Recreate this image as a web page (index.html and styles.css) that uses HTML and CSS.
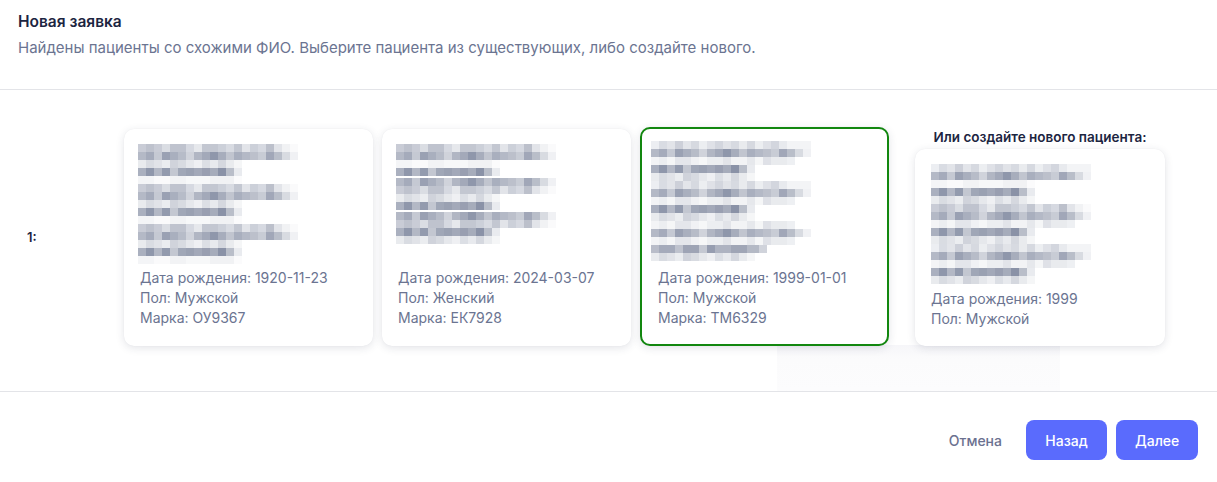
FILE: index.html
```html
<!DOCTYPE html>
<html lang="ru">
<head>
<meta charset="utf-8">
<title>Новая заявка</title>
<link rel="stylesheet" href="styles.css">
</head>
<body>
<div class="modal">
  <header class="head">
    <div class="title">Новая заявка</div>
    <div class="subtitle">Найдены пациенты со схожими ФИО. Выберите пациента из существующих, либо создайте нового.</div>
  </header>
  <main class="body">
    <div class="row-label">1:</div>
    <div class="cards">
      <div class="card">
        <div class="mosaic">
          <div class="m w1"></div><div class="m w2"></div><div class="m n1"></div><div class="m n2"></div><div class="m n3"></div>
          <div class="m w1"></div><div class="m w2"></div><div class="m n1"></div><div class="m n2"></div><div class="m n3"></div>
          <div class="m w1"></div><div class="m w2"></div><div class="m n1"></div><div class="m n2"></div><div class="m n3"></div>
        </div>
        <div class="info">Дата рождения: 1920-11-23</div>
        <div class="info">Пол: Мужской</div>
        <div class="info">Марка: ОУ9367</div>
      </div>
      <div class="card">
        <div class="mosaic">
          <div class="m w1"></div><div class="m w2"></div><div class="m n3"></div><div class="m n2"></div><div class="m gap"></div>
          <div class="m w2"></div><div class="m w1"></div><div class="m n1"></div><div class="m n2"></div><div class="m gap"></div>
          <div class="m w2"></div><div class="m w1"></div><div class="m n2"></div><div class="m n1"></div>
        </div>
        <div class="info">Дата рождения: 2024-03-07</div>
        <div class="info">Пол: Женский</div>
        <div class="info">Марка: ЕК7928</div>
      </div>
      <div class="card selected">
        <div class="mosaic wide">
          <div class="m w3"></div><div class="m w2"></div><div class="m w4"></div><div class="m n2"></div><div class="m n1"></div>
          <div class="m w3"></div><div class="m w2"></div><div class="m w4"></div><div class="m n2"></div><div class="m n1"></div>
          <div class="m w4"></div><div class="m w2"></div><div class="m w4"></div><div class="m n4"></div><div class="m n1"></div>
        </div>
        <div class="info">Дата рождения: 1999-01-01</div>
        <div class="info">Пол: Мужской</div>
        <div class="info">Марка: ТМ6329</div>
      </div>
      <div class="new-col">
        <div class="new-label">Или создайте нового пациента:</div>
        <div class="card new-card">
          <div class="mosaic">
            <div class="m w3"></div><div class="m w2"></div><div class="m n3"></div><div class="m n2"></div><div class="m n1"></div>
            <div class="m w1"></div><div class="m w2"></div><div class="m w4"></div><div class="m n2"></div><div class="m n1"></div>
            <div class="m w3"></div><div class="m w2"></div><div class="m w4"></div><div class="m n2"></div><div class="m n1"></div>
          </div>
          <div class="info">Дата рождения: 1999</div>
          <div class="info">Пол: Мужской</div>
        </div>
      </div>
    </div>
    <div class="ghost"></div>
  </main>
  <footer class="foot">
    <button class="btn-cancel">Отмена</button>
    <button class="btn">Назад</button>
    <button class="btn">Далее</button>
  </footer>
</div>
</body>
</html>
```

FILE: styles.css
```css
* { box-sizing: border-box; }
html, body { margin: 0; padding: 0; background: #ffffff; }
body {
  font-family: Inter, "Noto Sans", "Liberation Sans", sans-serif;
  color: #1c2541;
}
.modal { width: 1217px; height: 482px; }

.head {
  height: 90px;
  padding: 12px 18px 0;
  border-bottom: 1px solid #e3e4e8;
}
.title {
  font-size: 15.5px;
  font-weight: 600;
  line-height: 20px;
  color: #1c2541;
}
.subtitle {
  margin-top: 6px;
  font-size: 15px;
  line-height: 20px;
  color: #6b7491;
}

.body {
  position: relative;
  height: 302px;
  display: flex;
  align-items: center;
  padding: 0 0 8px 27px;
  border-bottom: 1px solid #e3e4e8;
}
.row-label {
  width: 97px;
  font-size: 13px;
  font-weight: 600;
  color: #1c2541;
}
.cards {
  display: flex;
  align-items: flex-end;
  gap: 9px;
  position: relative;
  z-index: 1;
}
.card {
  width: 249px;
  height: 217px;
  background: #fff;
  border-radius: 10px;
  box-shadow: 0 2px 8px rgba(40, 45, 80, 0.13), 0 0 1px rgba(40, 45, 80, 0.08);
  padding: 15px 16px 0;
}
.card.selected {
  height: 219px;
  border: 2px solid #12870f;
  padding: 14px 16px 0;
}
.mosaic { margin-left: -2px; height: 124px; }
.mosaic.wide { margin-left: -7px; margin-top: -2px; height: 127px; }
.info {
  font-size: 14px;
  line-height: 20px;
  color: #6b7491;
}

.new-col {
  margin-left: 17px;
  display: flex;
  flex-direction: column;
  align-items: center;
}
.new-label {
  font-size: 13.5px;
  font-weight: 600;
  line-height: 20px;
  color: #1c2541;
  margin-bottom: 2px;
}
.new-card { width: 250px; height: 197px; }
.new-card .mosaic { margin-left: 0; height: 125px; }

.m { height: 8px; }
.m.gap { height: 2px; }
.w1 {
  width: 160px;
  background: linear-gradient(90deg,
    #c9ccd6 0 8px, #bec2cd 8px 16px, #c9ccd6 16px 24px, #dadde3 24px 32px,
    #bfc3ce 32px 48px, #d6d9e1 48px 56px, #e6e8ec 56px 64px, #c3c7d1 64px 80px,
    #ccd0d9 80px 88px, #d8dbe2 88px 96px, #c3c7d1 96px 104px, #e2e4e9 104px 112px,
    #ccd0d9 112px 120px, #d6d9e1 120px 128px, #bcc0cb 128px 136px, #e2e4e9 136px 144px,
    #f1f2f4 144px 152px, #fafafb 152px 160px);
}
.w2 {
  width: 160px;
  background: linear-gradient(90deg,
    #b4b9c6 0 8px, #a5abbb 8px 16px, #c5c9d3 16px 24px, #9aa1b3 24px 32px,
    #a9afbe 32px 40px, #b7bcc8 40px 48px, #d0d3db 48px 56px, #b1b6c3 56px 64px,
    #a3a9b9 64px 72px, #8f97ab 72px 80px, #a7adbc 80px 88px, #c1c5cf 88px 96px,
    #a9afbe 96px 104px, #b4b9c6 104px 112px, #bcc0cb 112px 120px, #c8ccd5 120px 128px,
    #a1a7b8 128px 136px, #b9bec9 136px 144px, #d8dbe1 144px 152px, #f0f1f4 152px 160px);
}
.w3 {
  width: 160px;
  background: linear-gradient(90deg,
    #eceef2 0 8px, #d9dce3 8px 16px, #e2e4e9 16px 24px, #cdd0d9 24px 32px,
    #e3e5ea 32px 40px, #d6d9e0 40px 48px, #eceef1 48px 56px, #dfe1e7 56px 64px,
    #d3d6de 64px 72px, #e1e3e8 72px 80px, #d7dae1 80px 88px, #e9ebee 88px 96px,
    #d6d9e0 96px 104px, #eceef1 104px 112px, #dfe1e7 112px 120px, #d3d6de 120px 128px,
    #e8eaee 128px 136px, #f3f4f6 136px 160px);
}
.w4 {
  width: 160px;
  background: linear-gradient(90deg,
    #f3f4f6 0 8px, #eceef1 8px 16px, #f5f6f7 16px 24px, #e4e6eb 24px 40px,
    #f0f1f4 40px 48px, #f6f7f8 48px 56px, #eceef1 56px 72px, #e2e4e9 72px 80px,
    #f2f3f5 80px 96px, #e6e8ec 96px 104px, #f5f6f7 104px 112px, #dfe1e7 112px 120px,
    #e9ebee 120px 136px, #eef0f3 136px 144px, #ffffff 144px 160px);
}
.n1 {
  width: 104px;
  background: linear-gradient(90deg,
    #e9ebee 0 8px, #d9dce2 8px 16px, #e1e3e8 16px 24px, #ebedf0 24px 32px,
    #d0d3db 32px 40px, #d8dbe1 40px 48px, #e6e8ec 48px 56px, #eff0f3 56px 64px,
    #dcdfe5 64px 72px, #e8eaee 72px 80px, #d5d8df 80px 88px, #e9ebee 88px 96px,
    #f5f6f7 96px 104px);
}
.n2 {
  width: 104px;
  background: linear-gradient(90deg,
    #aab0bf 0 8px, #8f97ab 8px 16px, #b3b8c5 16px 24px, #939bae 24px 32px,
    #c3c7d1 32px 40px, #a0a7b7 40px 48px, #9aa1b2 48px 56px, #a3a9b9 56px 64px,
    #999fb1 64px 72px, #a6acbb 72px 80px, #8a92a7 80px 88px, #b9bec9 88px 96px,
    #e9ebef 96px 104px);
}
.n3 {
  width: 104px;
  background: linear-gradient(90deg,
    #f4f5f7 0 16px, #fafafb 16px 32px, #f2f3f5 32px 48px, #f7f8f9 48px 72px,
    #f1f2f4 72px 96px, #fbfbfc 96px 104px);
}
.n4 {
  width: 116px;
  background: linear-gradient(90deg,
    #b9bdc9 0 8px, #a5abbb 8px 24px, #bfc3ce 24px 32px, #9ea4b5 32px 48px,
    #c4c8d2 48px 56px, #969db0 56px 64px, #aeb3c1 64px 80px, #a0a6b6 80px 96px,
    #b4b9c5 96px 108px, #d0d3db 108px 116px);
}

.ghost {
  position: absolute;
  left: 777px;
  top: 255px;
  width: 283px;
  height: 46px;
  background: linear-gradient(180deg, #f6f6f9 0, #fbfbfc 30%, #fcfcfd 100%);
}

.foot {
  display: flex;
  justify-content: flex-end;
  align-items: center;
  padding: 28px 19px 0;
  gap: 9px;
}
.foot button {
  font-family: Inter, "Noto Sans", "Liberation Sans", sans-serif;
  font-size: 14px;
  font-weight: 500;
  height: 40px;
  border: none;
  border-radius: 8px;
  cursor: pointer;
}
.btn-cancel {
  background: transparent;
  color: #6b7190;
  padding: 0 12px;
  margin-right: 3px;
}
.btn {
  background: #5a6bfd;
  color: #ffffff;
  padding: 0 19px;
  width: 81px;
}
.btn + .btn { width: 82px; }
```
